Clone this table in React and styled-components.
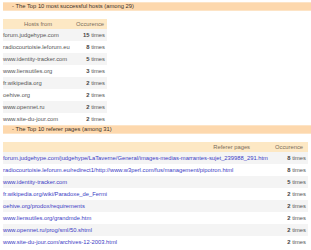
import styled, { createGlobalStyle } from 'styled-components';

const GlobalStyle = createGlobalStyle`
  html, body {
    margin: 0;
    padding: 0;
    background: #fff;
  }
  body {
    font-family: "Liberation Sans", Arial, sans-serif;
    font-size: 5.8px;
    color: #555;
  }
`;

const Page = styled.div`
  padding: 2px 0 0 3px;
  width: 308px;
`;

const SectionTitle = styled.div`
  background: #fdd8ad;
  border-top: 1px solid #fde4c6;
  border-bottom: 1px solid #fde4c6;
  height: 7px;
  line-height: 7px;
  padding-left: 9px;
  color: #3a3028;
  margin-bottom: ${(p) => p.$gap}px;
`;

const Table = styled.table`
  border-collapse: collapse;
  width: ${(p) => p.$width}px;
`;

const Head = styled.th`
  background: #fde8c4;
  color: #7a6c5c;
  font-weight: normal;
  height: 10px;
  padding: 0 ${(p) => p.$pad || 0}px 0 0;
  text-align: ${(p) => p.$align || 'center'};
  width: ${(p) => (p.$w ? `${p.$w}px` : 'auto')};
`;

const Row = styled.tr`
  background: ${(p) => (p.$odd ? '#f4f4f4' : '#fff')};
`;

const Cell = styled.td`
  height: 12px;
  padding: 0;
  white-space: nowrap;
  text-align: ${(p) => p.$align || 'left'};
  padding-right: ${(p) => p.$pad || 0}px;
`;

const Link = styled.a`
  color: #3b3bc4;
  text-decoration: none;
`;

const Num = styled.b`
  color: #444;
`;

const hosts = [
  ['forum.judgehype.com', 15],
  ['radiocourtoisie.leforum.eu', 8],
  ['www.identity-tracker.com', 5],
  ['www.liensutiles.org', 3],
  ['fr.wikipedia.org', 2],
  ['oehive.org', 2],
  ['www.opennet.ru', 2],
  ['www.site-du-jour.com', 2],
];

const referers = [
  ['forum.judgehype.com/judgehype/LaTaverne/General/images-medias-marrantes-sujet_239988_291.htm', 8],
  ['radiocourtoisie.leforum.eu/redirect1/http://www.w3perl.com/fus/management/pipotron.html', 8],
  ['www.identity-tracker.com', 5],
  ['fr.wikipedia.org/wiki/Paradoxe_de_Fermi', 2],
  ['oehive.org/prodox/requirements', 2],
  ['www.liensutiles.org/grandmde.htm', 2],
  ['www.opennet.ru/prog/sml/50.shtml', 2],
  ['www.site-du-jour.com/archives-12-2003.html', 2],
];

function Times({ n }) {
  return (
    <>
      <Num>{n}</Num> times
    </>
  );
}

export default function App() {
  return (
    <>
      <GlobalStyle />
      <Page>
        <SectionTitle $gap={8}>- The Top 10 most successful hosts (among 29)</SectionTitle>
        <Table $width={104}>
          <thead>
            <tr>
              <Head>Hosts from</Head>
              <Head $w={34}>Occurence</Head>
            </tr>
          </thead>
          <tbody>
            {hosts.map(([h, n], i) => (
              <Row key={h} $odd={i % 2 === 0}>
                <Cell>{h}</Cell>
                <Cell $align="right" $pad={2}>
                  <Times n={n} />
                </Cell>
              </Row>
            ))}
          </tbody>
        </Table>
        <SectionTitle $gap={8}>- The Top 10 referer pages (among 31)</SectionTitle>
        <Table $width={305}>
          <thead>
            <tr>
              <Head $align="right" $pad={20}>Referer pages</Head>
              <Head $w={38}>Occurence</Head>
            </tr>
          </thead>
          <tbody>
            {referers.map(([r, n], i) => (
              <Row key={r} $odd={i % 2 === 0}>
                <Cell>
                  <Link href="#">{r}</Link>
                </Cell>
                <Cell $align="right" $pad={2}>
                  <Times n={n} />
                </Cell>
              </Row>
            ))}
          </tbody>
        </Table>
      </Page>
    </>
  );
}
